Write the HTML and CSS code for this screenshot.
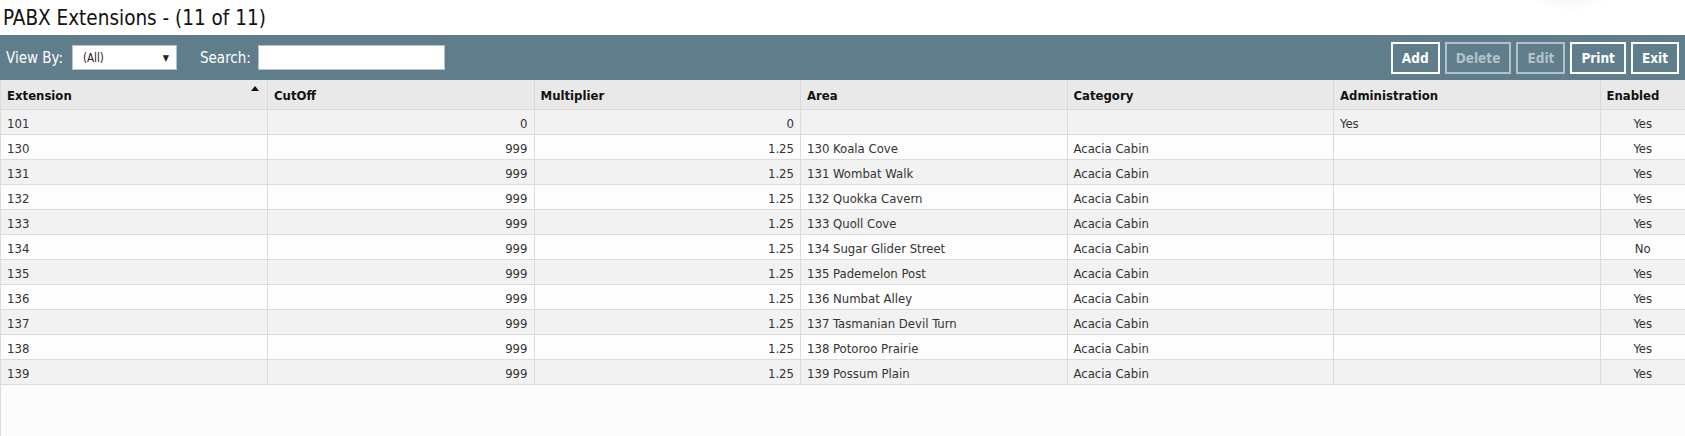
FILE: index.html
```html
<!DOCTYPE html>
<html>
<head>
    <link rel="stylesheet" href="styles.css">
</head>
<body>
    <div class="page-title">PABX Extensions - (11 of 11)</div>
    <div class="corner-shadow"></div>

    <div class="toolbar">
        <span class="toolbar-label">View By:</span>
        <div class="view-select">
            <span>(All)</span>
            <span class="select-arrow">&#9660;</span>
        </div>
        <span class="toolbar-label search-label">Search:</span>
        <input class="search-box" type="text">

        <div class="toolbar-buttons">
            <button class="tool-btn">Add</button>
            <button class="tool-btn disabled">Delete</button>
            <button class="tool-btn disabled">Edit</button>
            <button class="tool-btn">Print</button>
            <button class="tool-btn">Exit</button>
        </div>
    </div>

    <div class="grid">
        <table class="grid-table">
            <colgroup>
                <col class="col-std">
                <col class="col-std">
                <col class="col-std">
                <col class="col-std">
                <col class="col-std">
                <col class="col-std">
                <col>
            </colgroup>
            <thead>
                <tr>
                    <th>Extension <span class="sort-arrow"></span></th>
                    <th>CutOff</th>
                    <th>Multiplier</th>
                    <th>Area</th>
                    <th>Category</th>
                    <th>Administration</th>
                    <th>Enabled</th>
                </tr>
            </thead>
            <tbody>
                <tr><td>101</td><td class="num">0</td><td class="num">0</td><td></td><td></td><td>Yes</td><td class="mid">Yes</td></tr>
                <tr><td>130</td><td class="num">999</td><td class="num">1.25</td><td>130 Koala Cove</td><td>Acacia Cabin</td><td></td><td class="mid">Yes</td></tr>
                <tr><td>131</td><td class="num">999</td><td class="num">1.25</td><td>131 Wombat Walk</td><td>Acacia Cabin</td><td></td><td class="mid">Yes</td></tr>
                <tr><td>132</td><td class="num">999</td><td class="num">1.25</td><td>132 Quokka Cavern</td><td>Acacia Cabin</td><td></td><td class="mid">Yes</td></tr>
                <tr><td>133</td><td class="num">999</td><td class="num">1.25</td><td>133 Quoll Cove</td><td>Acacia Cabin</td><td></td><td class="mid">Yes</td></tr>
                <tr><td>134</td><td class="num">999</td><td class="num">1.25</td><td>134 Sugar Glider Street</td><td>Acacia Cabin</td><td></td><td class="mid">No</td></tr>
                <tr><td>135</td><td class="num">999</td><td class="num">1.25</td><td>135 Pademelon Post</td><td>Acacia Cabin</td><td></td><td class="mid">Yes</td></tr>
                <tr><td>136</td><td class="num">999</td><td class="num">1.25</td><td>136 Numbat Alley</td><td>Acacia Cabin</td><td></td><td class="mid">Yes</td></tr>
                <tr><td>137</td><td class="num">999</td><td class="num">1.25</td><td>137 Tasmanian Devil Turn</td><td>Acacia Cabin</td><td></td><td class="mid">Yes</td></tr>
                <tr><td>138</td><td class="num">999</td><td class="num">1.25</td><td>138 Potoroo Prairie</td><td>Acacia Cabin</td><td></td><td class="mid">Yes</td></tr>
                <tr><td>139</td><td class="num">999</td><td class="num">1.25</td><td>139 Possum Plain</td><td>Acacia Cabin</td><td></td><td class="mid">Yes</td></tr>
            </tbody>
        </table>
    </div>
</body>
</html>
```

FILE: styles.css
```css
body {
    margin: 0;
    overflow: hidden;
    background: #fff;
    font-family: "DejaVu Sans Condensed", "DejaVu Sans", sans-serif;
    color: #333;
}

.page-title {
    height: 35px;
    line-height: 36px;
    padding-left: 3px;
    font-size: 20.5px;
    color: #111;
}

/* faint shadow peeking in at the top right */
.corner-shadow {
    position: absolute;
    top: -28px;
    right: 70px;
    width: 90px;
    height: 40px;
    border-radius: 50%;
    background: radial-gradient(ellipse at center, rgba(0, 0, 0, 0.06), rgba(0, 0, 0, 0) 70%);
}

.toolbar {
    display: flex;
    align-items: center;
    height: 45px;
    padding: 0 6px;
    background: #607d8b;
}

.toolbar-label {
    color: #fff;
    font-size: 15px;
    margin-right: 9px;
}

.search-label {
    margin-left: 23px;
    margin-right: 7px;
}

.view-select {
    display: flex;
    align-items: center;
    justify-content: space-between;
    box-sizing: border-box;
    width: 105px;
    height: 25px;
    padding: 0 7px 0 10px;
    background: #fff;
    border: 1px solid #b8c4ca;
    font-size: 11.5px;
    color: #222;
}

.select-arrow {
    font-size: 9px;
}

.search-box {
    box-sizing: border-box;
    width: 187px;
    height: 25px;
    margin: 0;
    border: 1px solid #b8c4ca;
    background: #fff;
}

.toolbar-buttons {
    display: flex;
    gap: 5px;
    margin-left: auto;
}

.tool-btn {
    box-sizing: border-box;
    height: 32px;
    margin: 0;
    padding: 0 9px;
    background: transparent;
    border: 2px solid #fff;
    color: #fff;
    font-family: inherit;
    font-size: 13.5px;
    font-weight: bold;
    cursor: pointer;
}

.tool-btn.disabled {
    border-color: #b3c1c8;
    color: #b3c1c8;
    cursor: default;
}

.grid {
    height: 356px;
    box-sizing: border-box;
    border-left: 1px solid #dcdcdc;
    background: #fcfcfc;
}

.grid-table {
    width: 100%;
    table-layout: fixed;
    border-collapse: collapse;
    font-size: 13px;
}

.col-std {
    width: 266.5px;
}

.grid-table th {
    height: 27px;
    padding: 2px 6px 0;
    background: #e9e9e9;
    border-right: 1px solid #d8d8d8;
    border-bottom: 1px solid #d8d8d8;
    text-align: left;
    font-weight: bold;
    color: #111;
}

.sort-arrow {
    float: right;
    margin: -2px 2px 0 0;
    border-left: 4px solid transparent;
    border-right: 4px solid transparent;
    border-bottom: 5px solid #111;
}

.grid-table td {
    height: 22px;
    padding: 2px 6px 0;
    border-right: 1px solid #dcdcdc;
    border-bottom: 1px solid #dcdcdc;
    white-space: nowrap;
    overflow: hidden;
}

.grid-table th:last-child,
.grid-table td:last-child {
    border-right: none;
}

.grid-table tbody tr:nth-child(odd) {
    background: #f2f2f2;
}

.grid-table tbody tr:nth-child(even) {
    background: #fdfdfd;
}

.num {
    text-align: right;
}

.mid {
    text-align: center;
}
```
